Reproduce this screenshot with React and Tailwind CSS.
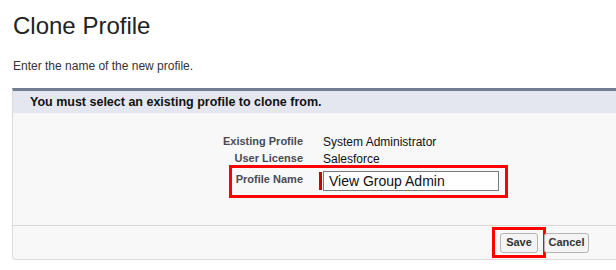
export default function App() {
  return (
    <div className="w-[616px] h-[270px] bg-white overflow-hidden" style={{ fontFamily: '"Liberation Sans", Arial, sans-serif' }}>
      <div className="pl-[13px] pt-[12px]">
        <h1 className="text-[24px] leading-[28px] text-[#222]">Clone Profile</h1>
        <p className="mt-[19px] text-[12px] leading-[14px] text-[#333]">Enter the name of the new profile.</p>
      </div>

      <div className="ml-[12px] mt-[15px] w-[620px] border-t-[3px] border-[#747c91] border-l border-b border-l-[#dcdcdc] border-b-[#dcdcdc] rounded-bl-[4px] bg-[#f8f8f8]">
        <div className="h-[22px] bg-[#e4e7ef] pl-[17px] flex items-center">
          <span className="text-[12.5px] font-bold text-[#111]">You must select an existing profile to clone from.</span>
        </div>

        <div className="h-[113px] border-b border-[#d8d8d8] pt-[20px]">
          <div className="flex items-center h-[17px]">
            <div className="w-[290px] text-right text-[11px] font-bold text-[#4a4a56]">Existing Profile</div>
            <div className="pl-[20px] text-[12px] text-[#111]">System Administrator</div>
          </div>
          <div className="flex items-center h-[17px]">
            <div className="w-[290px] text-right text-[11px] font-bold text-[#4a4a56]">User License</div>
            <div className="pl-[20px] text-[12px] text-[#111]">Salesforce</div>
          </div>
          <div className="ml-[216px] mt-[-2px] w-[279px] h-[33px] border-[3px] border-[#ff0000] flex items-start">
            <div className="w-[71px] text-right text-[11px] font-bold text-[#4a4a56] pt-[3px]">Profile Name</div>
            <div className="ml-[16px] mt-[4px] w-[3px] h-[18px] bg-[#c00]"></div>
            <div className="ml-[1px] mt-[3px] w-[176px] h-[20px] border border-[#7a7a7a] bg-white pl-[5px] flex items-center text-[14px] text-[#111]">
              View Group Admin
            </div>
          </div>
        </div>

        <div className="h-[33px] flex items-center">
          <div className="ml-[479px] w-[54px] h-[31px] border-[3px] border-[#ff0000] flex items-center justify-center">
            <button className="w-[38px] h-[20px] border border-[#b5b5b5] rounded-[3px] bg-[#f4f4f4] text-[11px] font-bold text-[#333]">Save</button>
          </div>
          <button className="ml-[-2px] w-[45px] h-[20px] border border-[#b5b5b5] rounded-[3px] bg-[#f4f4f4] text-[11px] font-bold text-[#333]">Cancel</button>
        </div>
      </div>
    </div>
  );
}
